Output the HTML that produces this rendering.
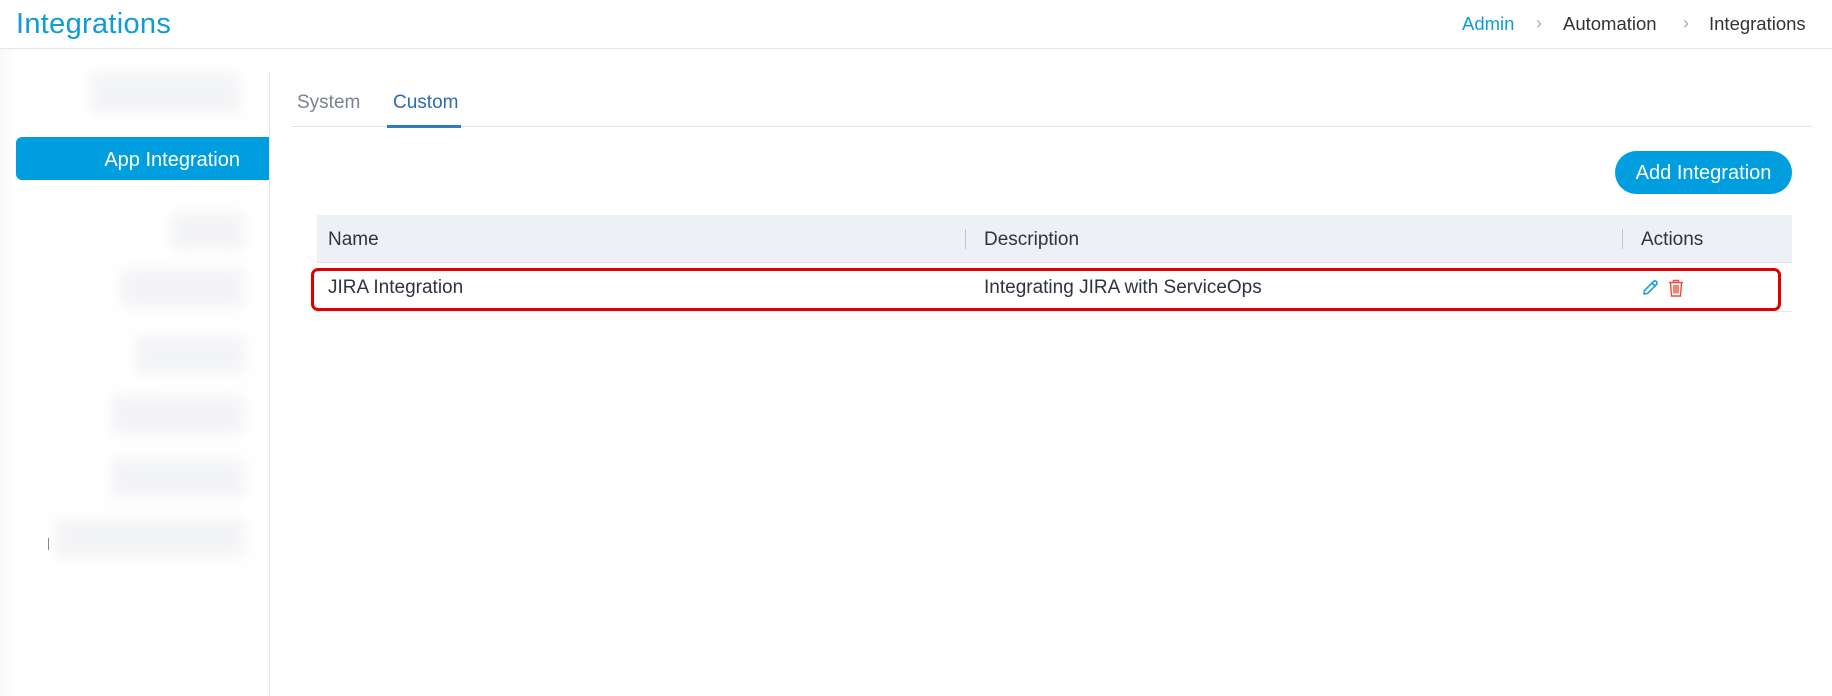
<!DOCTYPE html>
<html><head><meta charset="utf-8"><style>
*{margin:0;padding:0;box-sizing:border-box}
body{width:1832px;height:696px;background:#fff;font-family:"Liberation Sans",sans-serif;position:relative;overflow:hidden;color:#2c3440}
.a{position:absolute;white-space:nowrap}
.blur{position:absolute;background:#f3f4f6;filter:blur(7px);border-radius:6px}
</style></head><body>
<div class="a" style="left:0;top:0;width:1832px;height:49px;border-bottom:1px solid #e3e7ee;box-shadow:0 1px 2px rgba(0,0,0,0.03)"></div>
<div class="a" style="left:16px;top:8px;font-size:29px;letter-spacing:0.3px;color:#0f9bd8">Integrations</div>
<div class="a" style="left:1462px;top:13px;font-size:18.5px;color:#0f9bd8">Admin</div>
<div class="a" style="left:1536px;top:13px;font-size:18px;color:#aab">›</div>
<div class="a" style="left:1563px;top:13px;font-size:18.5px;color:#333">Automation</div>
<div class="a" style="left:1683px;top:13px;font-size:18px;color:#aab">›</div>
<div class="a" style="left:1709px;top:13px;font-size:18.5px;color:#333">Integrations</div>

<div class="a" style="left:0;top:50px;width:16px;height:646px;background:linear-gradient(90deg,#f8f9fa,#fff)"></div>
<div class="a" style="left:269px;top:72px;width:1px;height:624px;background:#e6e9ef"></div>
<div class="blur" style="left:90px;top:72px;width:150px;height:42px"></div>
<div class="blur" style="left:170px;top:212px;width:75px;height:38px"></div>
<div class="blur" style="left:120px;top:268px;width:125px;height:40px"></div>
<div class="blur" style="left:135px;top:335px;width:110px;height:40px"></div>
<div class="blur" style="left:110px;top:395px;width:135px;height:40px"></div>
<div class="blur" style="left:110px;top:458px;width:135px;height:40px"></div>
<div class="blur" style="left:55px;top:518px;width:190px;height:40px"></div>
<div class="a" style="left:48px;top:538px;width:1px;height:12px;background:#888"></div>
<div class="a" style="left:16px;top:137px;width:253px;height:43px;background:#009ede;border-radius:6px 0 0 6px"></div>
<div class="a" style="left:16px;top:139px;width:224px;height:43px;line-height:43px;text-align:right;color:#fff;font-size:20px">App Integration</div>

<div class="a" style="left:291px;top:126px;width:1521px;height:1px;background:#e0e4ea"></div>
<div class="a" style="left:297px;top:92px;font-size:19px;color:#7a8290">System</div>
<div class="a" style="left:393px;top:92px;font-size:19px;color:#2b6cb0">Custom</div>
<div class="a" style="left:387px;top:125px;width:74px;height:3px;background:#2f7ac4"></div>

<div class="a" style="left:1615px;top:151px;width:177px;height:43px;border-radius:22px;background:#009ede;color:#fff;font-size:20px;line-height:45px;text-align:center">Add Integration</div>

<div class="a" style="left:317px;top:215px;width:1475px;height:48px;background:#edf0f5;border-bottom:1px solid #e0e4ea"></div>
<div class="a" style="left:328px;top:229px;font-size:19px;color:#2c3440">Name</div>
<div class="a" style="left:965px;top:229px;width:1px;height:20px;background:#b9c6d6"></div>
<div class="a" style="left:984px;top:229px;font-size:19px;color:#2c3440">Description</div>
<div class="a" style="left:1622px;top:229px;width:1px;height:20px;background:#b9c6d6"></div>
<div class="a" style="left:1641px;top:229px;font-size:19px;color:#2c3440">Actions</div>
<div class="a" style="left:317px;top:311px;width:1475px;height:1px;background:#e6e9ef"></div>
<div class="a" style="left:311px;top:268px;width:1470px;height:43px;border:3px solid #e00000;border-radius:7px"></div>
<div class="a" style="left:328px;top:277px;font-size:19px;color:#2c3440">JIRA Integration</div>
<div class="a" style="left:984px;top:277px;font-size:19px;color:#2c3440">Integrating JIRA with ServiceOps</div>
<svg class="a" style="left:1641px;top:279px" width="18" height="18" viewBox="0 0 18 18"><path d="M3 15 L3.5 11.5 L12.5 2.5 Q14 1.5 15.5 2.5 Q16.5 4 15.5 5.5 L6.5 14.5 Z M11 4 L14 7" fill="none" stroke="#1a9fe0" stroke-width="1.6" stroke-linejoin="round"/></svg>
<svg class="a" style="left:1668px;top:279px" width="16" height="18" viewBox="0 0 16 18"><path d="M1 3.5 H15 M5.5 3.5 V1.5 H10.5 V3.5 M2.5 3.5 L3.5 17 H12.5 L13.5 3.5 M6 6 V14.5 M8 6 V14.5 M10 6 V14.5" fill="none" stroke="#ef4b3f" stroke-width="1.4"/></svg>
</body></html>
